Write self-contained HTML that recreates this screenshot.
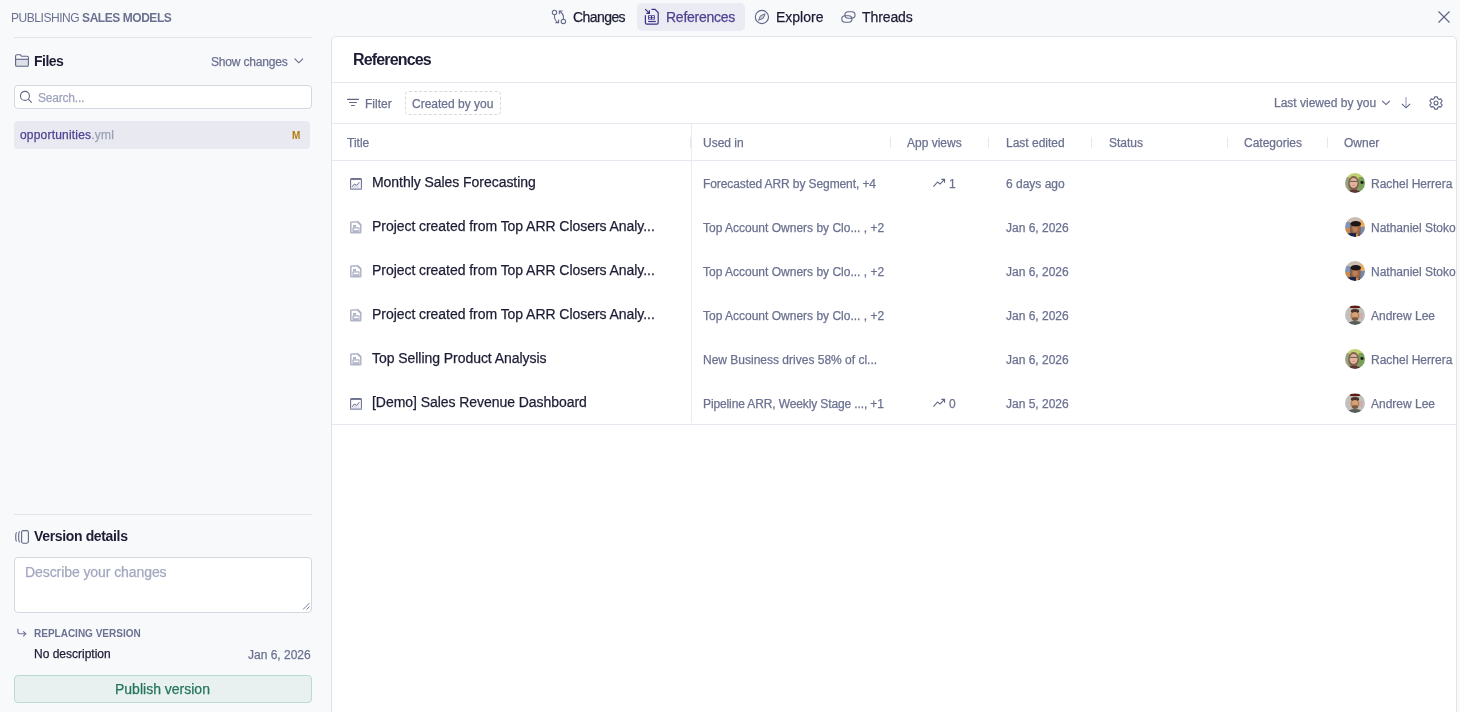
<!DOCTYPE html>
<html><head><meta charset="utf-8">
<style>
*{box-sizing:border-box;margin:0;padding:0}
html,body{width:1460px;height:712px;overflow:hidden;background:#f8f9fb;font-family:"Liberation Sans",sans-serif;}
.t{position:absolute;white-space:nowrap;line-height:1;}
.ab{position:absolute;}
.s12{font-size:12px}
.s14{font-size:14px}
.mut{color:#6b7190}
.dk{color:#1c1d35}
svg{position:absolute;overflow:visible}
.t{will-change:transform;-webkit-text-stroke:0.25px currentColor}
#clip{position:absolute;left:332px;top:0;width:1124px;height:712px;overflow:hidden}
</style></head><body>

<!-- top title -->
<div class="t s12 mut" style="left:11px;top:12px;letter-spacing:-0.45px;-webkit-text-stroke:0">PUBLISHING <b style="-webkit-text-stroke:0">SALES MODELS</b></div>

<!-- tabs -->
<div class="ab" style="left:637px;top:3px;width:108px;height:28px;background:#ebebf4;border-radius:5px;"></div>
<svg style="left:548px;top:6px" width="24" height="22" viewBox="0 0 24 22" fill="none" stroke="#636988" stroke-width="1.05">
<circle cx="6.5" cy="6.5" r="2.2"/>
<circle cx="15.4" cy="15.4" r="2.2"/>
<path d="M6.5 8.7V11.5Q6.5 14 9.6 16.3"/>
<path d="M7.4 16.6H10.6V13.4"/>
<path d="M15.4 13.2V10.5Q15.4 8 11.6 5.3"/>
<path d="M14.5 5H11.3V8.2"/>
</svg>
<div class="t s14 dk" style="left:573px;top:10px;letter-spacing:-0.57px">Changes</div>

<svg style="left:640px;top:6px" width="24" height="22" viewBox="0 0 24 22" fill="none" stroke="#3d3186" stroke-width="1.2">
<path d="M5.4 9.3V16.8A1.4 1.4 0 0 0 6.8 18.2H16.8A1.4 1.4 0 0 0 18.2 16.8V6.5L15 3.3H11.5"/>
<path d="M5.2 3.1L9.4 7.3M6.3 7.3H9.4V4.2"/>
<rect x="8.1" y="9.3" width="6.7" height="4.3" fill="#3d3186" stroke="none"/>
<rect x="9" y="10.1" width="2" height="1" fill="#ebebf4" stroke="none"/>
<rect x="12" y="10.1" width="2" height="1" fill="#ebebf4" stroke="none"/>
<rect x="9" y="11.8" width="2" height="1" fill="#ebebf4" stroke="none"/>
<rect x="12" y="11.8" width="2" height="1" fill="#ebebf4" stroke="none"/>
<path d="M8.1 15.5H15.8"/>
</svg>
<div class="t s14" style="left:666px;top:10px;color:#4f4290;letter-spacing:-0.26px">References</div>

<svg style="left:750px;top:6px" width="24" height="22" viewBox="0 0 24 22" fill="none" stroke="#5f6586" stroke-width="1.1">
<circle cx="11.9" cy="11" r="6.6"/>
<path d="M8.6 14.3L10.4 9.8L15.1 7.8L13.3 12.3Z" stroke-width="0.9" fill="#c6c9d8" stroke-linejoin="round"/>
</svg>
<div class="t s14 dk" style="left:775.5px;top:10px;">Explore</div>

<svg style="left:837px;top:6px" width="24" height="22" viewBox="0 0 24 22" fill="none" stroke="#5f6586" stroke-width="1.1">
<rect x="7.9" y="5.7" width="10.1" height="6.5" rx="3.2"/>
<rect x="4.8" y="9.8" width="10.1" height="6.5" rx="3.2"/>
</svg>
<div class="t s14 dk" style="left:862px;top:10px;letter-spacing:-0.1px">Threads</div>

<!-- close -->
<svg style="left:1438px;top:11px" width="12" height="12" viewBox="0 0 12 12"><path d="M0.5 0.5L11.5 11.5M11.5 0.5L0.5 11.5" stroke="#5f6586" stroke-width="1.2" fill="none"/></svg>

<!-- sidebar -->
<div class="ab" style="left:14px;top:37px;width:298px;height:1px;background:#e4e5ec"></div>
<svg style="left:10px;top:48px" width="24" height="24" viewBox="0 0 24 24" fill="none" stroke="#5f6586" stroke-width="1.1">
<rect x="5.6" y="11.3" width="12.8" height="7" fill="#e0e1e8" stroke="none"/>
<path d="M5.6 17A1.3 1.3 0 0 0 6.9 18.3H17.1A1.3 1.3 0 0 0 18.4 17V9.5A1.3 1.3 0 0 0 17.1 8.2H11.5L10.3 6.7H6.9A1.3 1.3 0 0 0 5.6 8Z"/>
<path d="M5.6 11.3H18.4"/>
</svg>
<div class="t s14 dk" style="left:34px;top:54.2px;font-weight:bold;letter-spacing:-0.5px;-webkit-text-stroke:0">Files</div>
<div class="t s12 mut" style="left:210.8px;top:55.8px;letter-spacing:-0.18px">Show changes</div>
<svg style="left:294px;top:58px" width="10" height="6" viewBox="0 0 10 6"><path d="M0.6 0.6L4.8 4.8L9 0.6" fill="none" stroke="#5f6586" stroke-width="1.1"/></svg>

<div class="ab" style="left:14px;top:85px;width:298px;height:24px;background:#fff;border:1px solid #d5d7e2;border-radius:4px"></div>
<svg style="left:16px;top:86px" width="24" height="22" viewBox="0 0 24 22" fill="none" stroke="#5f6586" stroke-width="1.1">
<circle cx="8.95" cy="9.9" r="4.5"/><path d="M12.2 13.2L15.8 16.7"/>
</svg>
<div class="t s12" style="left:38.4px;top:91.8px;color:#a0a5bc;letter-spacing:-0.2px">Search...</div>

<div class="ab" style="left:14px;top:121px;width:296px;height:28px;background:#e9e9f2;border-radius:4px"></div>
<div class="t s12" style="left:20.2px;top:129.3px;color:#4f4290;letter-spacing:0.2px">opportunities<span style="color:#9ca0b5">.yml</span></div>
<div class="t" style="left:292px;top:130.9px;font-size:10px;font-weight:bold;color:#b07e0c;-webkit-text-stroke:0">M</div>

<div class="ab" style="left:14px;top:514px;width:298px;height:1px;background:#e4e5ec"></div>
<svg style="left:10px;top:524px" width="24" height="24" viewBox="0 0 24 24" fill="none" stroke="#5f6586" stroke-width="1.1">
<rect x="11.6" y="6.6" width="6.8" height="12.6" rx="1.6"/>
<path d="M9.5 7.2Q8.6 8.5 8.6 12.8Q8.6 17.1 9.5 18.4"/>
<path d="M6.5 8.3Q5.7 9.5 5.7 12.9Q5.7 16.3 6.5 17.5"/>
</svg>
<div class="t s14 dk" style="left:34px;top:529.2px;font-weight:bold;letter-spacing:-0.35px;-webkit-text-stroke:0">Version details</div>
<div class="ab" style="left:14px;top:557px;width:298px;height:56px;background:#fff;border:1px solid #d5d7e2;border-radius:4px"></div>
<svg style="left:300px;top:600px" width="10" height="10" viewBox="0 0 10 10"><path d="M9.5 3L3 9.5M9.5 6.5L6.5 9.5" stroke="#6b7190" stroke-width="0.9" fill="none"/></svg>
<div class="t s14" style="left:24.5px;top:565.4px;color:#a3a8bf;letter-spacing:-0.08px">Describe your changes</div>

<svg style="left:12px;top:622px" width="20" height="20" viewBox="0 0 20 20" fill="none" stroke="#6b7190" stroke-width="1.1">
<path d="M5.9 6.7V10Q5.9 11.8 7.7 11.8H13.6"/>
<path d="M11.2 9.3L13.8 11.8L11.2 14.4"/>
</svg>
<div class="t mut" style="left:34px;top:628.5px;font-size:10px;font-weight:bold;letter-spacing:0px;-webkit-text-stroke:0">REPLACING VERSION</div>
<div class="t s12 dk" style="left:34px;top:647.7px;">No description</div>
<div class="t s12 mut" style="left:247.7px;top:648.6px;">Jan 6, 2026</div>

<div class="ab" style="left:14px;top:675px;width:298px;height:28px;background:#e8f1ef;border:1px solid #b9dcd0;border-radius:4px"></div>
<div class="t s14" style="left:115.2px;top:681.9px;color:#25745e">Publish version</div>

<!-- panel -->
<div class="ab" style="left:331px;top:36px;width:1126px;height:690px;background:#fff;border:1px solid #e2e3e8;border-radius:5px"></div>
<div class="t dk" style="left:352.6px;top:52.3px;font-size:16px;font-weight:bold;letter-spacing:-0.85px;-webkit-text-stroke:0">References</div>
<div class="ab" style="left:332px;top:82px;width:1124px;height:1px;background:#e6e7ef"></div>
<svg style="left:340px;top:92px" width="24" height="24" viewBox="0 0 24 24" fill="none" stroke="#5f6586" stroke-width="1.1">
<path d="M7.1 7.4H18.9M9.1 10.45H16.9M11.1 13.5H14.8"/>
</svg>
<div class="t s12 mut" style="left:364.5px;top:97.6px;">Filter</div>
<div class="ab" style="left:405px;top:91px;width:96px;height:24px;border:1px dashed #d5d7e2;border-radius:4px"></div>
<div class="t s12 mut" style="left:412px;top:97.6px;">Created by you</div>
<div class="t s12 mut" style="left:1274.4px;top:97px;">Last viewed by you</div>
<svg style="left:1376px;top:92px" width="72" height="22" viewBox="0 0 72 22" fill="none" stroke="#5f6586" stroke-width="1.1">
<path d="M6.2 8.9L10 12.6L13.8 8.9"/>
<path d="M30 4.9V15.6" stroke="#9a9fb8"/>
<path d="M25.9 11.8L30 15.8L34.1 11.8"/>
</svg>
<svg style="left:1429px;top:96px" width="14" height="14" viewBox="0 0 14 14" fill="none" stroke="#5f6586" stroke-width="1.1">
<path d="M5.7 0.9H8.3L8.8 2.6L10.2 3.4L11.9 2.9L13.2 5.2L11.9 6.4V7.6L13.2 8.8L11.9 11.1L10.2 10.6L8.8 11.4L8.3 13.1H5.7L5.2 11.4L3.8 10.6L2.1 11.1L0.8 8.8L2.1 7.6V6.4L0.8 5.2L2.1 2.9L3.8 3.4L5.2 2.6Z" stroke-linejoin="round"/>
<circle cx="7" cy="7" r="2"/>
</svg>
<div class="ab" style="left:332px;top:123px;width:1124px;height:1px;background:#e6e7ef"></div>

<!-- header -->
<div class="t s12 mut" style="left:347px;top:137.1px;">Title</div>
<div class="t s12 mut" style="left:703px;top:137.1px;">Used in</div>
<div class="t s12 mut" style="left:907px;top:137.1px;">App views</div>
<div class="t s12 mut" style="left:1005.5px;top:137.1px;">Last edited</div>
<div class="t s12 mut" style="left:1108.6px;top:137.1px;">Status</div>
<div class="t s12 mut" style="left:1244px;top:137.1px;">Categories</div>
<div class="t s12 mut" style="left:1344px;top:137.1px;">Owner</div>
<div class="ab" style="left:690px;top:137px;width:1px;height:11px;background:#e6e7ef"></div>
<div class="ab" style="left:890px;top:136.5px;width:1px;height:11px;background:#e6e7ef"></div>
<div class="ab" style="left:988px;top:136.5px;width:1px;height:11px;background:#e6e7ef"></div>
<div class="ab" style="left:1091px;top:136.5px;width:1px;height:11px;background:#e6e7ef"></div>
<div class="ab" style="left:1227px;top:136.5px;width:1px;height:11px;background:#e6e7ef"></div>
<div class="ab" style="left:1327px;top:136.5px;width:1px;height:11px;background:#e6e7ef"></div>
<div class="ab" style="left:332px;top:160px;width:1124px;height:1px;background:#e6e7ef"></div>
<div class="ab" style="left:691px;top:123px;width:1px;height:300px;background:#eaebf2"></div>
<div class="ab" style="left:332px;top:424px;width:1124px;height:1px;background:#e6e7ef"></div>

<div style="position:absolute;left:0;top:0;width:1456px;height:712px;overflow:hidden">
<svg style="left:350px;top:177.5px" width="12" height="12" viewBox="0 0 12 12">
<path d="M2 8.9L4.3 6L6.6 7.3L9.4 4.2V10.3H2Z" fill="#e3e5ec"/>
<path d="M1.6 11.4H10.4A1 1 0 0 0 11.4 10.4V1.6A1 1 0 0 0 10.4 0.6H1.6A1 1 0 0 0 0.6 1.6V10.4A1 1 0 0 0 1.6 11.4Z" fill="none" stroke="#6b7190" stroke-width="1.1"/>
<rect x="0.6" y="0.6" width="10.8" height="1.3" fill="#6b7190"/>
<rect x="0.3" y="10.2" width="11.4" height="1.6" rx="0.8" fill="#b3b7ca"/>
<path d="M2 8.9L4.3 6L6.6 7.3L9.4 4.2" fill="none" stroke="#6b7190" stroke-width="1"/>
</svg>
<div class="t s14 dk" style="left:371.6px;top:175.40px;letter-spacing:-0.05px">Monthly Sales Forecasting</div>
<div class="t s12 mut" style="left:703px;top:177.90px;letter-spacing:-0.1px">Forecasted ARR by Segment, +4</div>
<svg style="left:933px;top:178.7px" width="13" height="9" viewBox="0 0 13 9"><path d="M0.4 7.6L4.6 3L7.1 5.1L11.5 0.4M8.3 0.4H11.6V3.7" fill="none" stroke="#5f6586" stroke-width="1.1"/></svg>
<div class="t s12 mut" style="left:949px;top:177.90px">1</div>
<div class="t s12 mut" style="left:1006px;top:177.90px">6 days ago</div>
<svg style="left:1345px;top:173px" width="20" height="20" viewBox="0 0 20 20"><defs><clipPath id="c1345173"><circle cx="10" cy="10" r="10"/></clipPath><filter id="fc1345173" x="-10%" y="-10%" width="120%" height="120%"><feGaussianBlur stdDeviation="0.45"/></filter></defs><g clip-path="url(#c1345173)"><g filter="url(#fc1345173)"><rect width="20" height="20" fill="#8fa070"/>
<ellipse cx="10" cy="1.5" rx="9" ry="4.5" fill="#c2cf74"/>
<rect x="14" y="4" width="7" height="14" fill="#76a058"/>
<ellipse cx="17" cy="9.5" rx="1.6" ry="1.4" fill="#1a2016"/>
<rect x="0" y="6" width="3" height="9" fill="#9aa28a"/>
<ellipse cx="8.6" cy="10.5" rx="5.4" ry="7.6" fill="#80604a"/>
<ellipse cx="8.6" cy="10" rx="3.9" ry="5" fill="#e2b4a0"/>
<rect x="4.8" y="7.9" width="7.6" height="1" fill="#6a5a58"/>
<ellipse cx="8.6" cy="12.6" rx="1.3" ry="0.5" fill="#c88080"/>
<ellipse cx="9" cy="19.8" rx="7" ry="3" fill="#5a3630"/></g></g></svg>
<div class="t s12 mut" style="left:1371.3px;top:177.90px">Rachel Herrera</div>
<svg style="left:350px;top:221px" width="12" height="13" viewBox="0 0 12 13">
<path d="M1.5 0.2H7.7L11.5 4V10.9A1.5 1.5 0 0 1 10 12.4H1.5A1.5 1.5 0 0 1 0 10.9V1.7A1.5 1.5 0 0 1 1.5 0.2Z" fill="#b1b5c8"/>
<path d="M1.6 1.7H7.1L10 4.6V10.9H1.6Z" fill="#fff"/>
<rect x="3" y="4" width="3.1" height="2.4" fill="#b1b5c8"/>
<rect x="2.4" y="6.2" width="7.2" height="5" rx="1" fill="#b1b5c8"/>
<rect x="3.8" y="7.6" width="4.8" height="1.6" fill="#fff"/>
<path d="M7.6 0.2L11.5 4" stroke="#8d92ab" stroke-width="0.9"/>
</svg>
<div class="t s14 dk" style="left:371.6px;top:219.40px;letter-spacing:-0.05px">Project created from Top ARR Closers Analy...</div>
<div class="t s12 mut" style="left:703px;top:221.90px;letter-spacing:0px">Top Account Owners by Clo... , +2</div>
<div class="t s12 mut" style="left:1006px;top:221.90px">Jan 6, 2026</div>
<svg style="left:1345px;top:217px" width="20" height="20" viewBox="0 0 20 20"><defs><clipPath id="c1345217"><circle cx="10" cy="10" r="10"/></clipPath><filter id="fc1345217" x="-10%" y="-10%" width="120%" height="120%"><feGaussianBlur stdDeviation="0.45"/></filter></defs><g clip-path="url(#c1345217)"><g filter="url(#fc1345217)"><rect width="20" height="20" fill="#6c6058"/>
<rect x="0" y="0" width="20" height="6" fill="#c9bcb0"/>
<rect x="0" y="5" width="5" height="6" fill="#8494b4"/>
<rect x="0" y="11" width="5" height="5" fill="#c88850"/>
<rect x="15.5" y="3" width="5" height="7" fill="#e8a860"/>
<rect x="15.5" y="10" width="5" height="8" fill="#7a88a8"/>
<ellipse cx="10.8" cy="11.8" rx="4.6" ry="5.6" fill="#9c6444"/>
<ellipse cx="10.2" cy="11.5" rx="2.6" ry="3.6" fill="#bf8058"/>
<ellipse cx="10.8" cy="6.8" rx="5.2" ry="2.8" fill="#1c1616"/>
<ellipse cx="8" cy="20.5" rx="8" ry="4.5" fill="#1c2444"/>
<rect x="11" y="16.5" width="2.5" height="4" fill="#d88848"/></g></g></svg>
<div class="t s12 mut" style="left:1371.3px;top:221.90px">Nathaniel Stokoe</div>
<svg style="left:350px;top:265px" width="12" height="13" viewBox="0 0 12 13">
<path d="M1.5 0.2H7.7L11.5 4V10.9A1.5 1.5 0 0 1 10 12.4H1.5A1.5 1.5 0 0 1 0 10.9V1.7A1.5 1.5 0 0 1 1.5 0.2Z" fill="#b1b5c8"/>
<path d="M1.6 1.7H7.1L10 4.6V10.9H1.6Z" fill="#fff"/>
<rect x="3" y="4" width="3.1" height="2.4" fill="#b1b5c8"/>
<rect x="2.4" y="6.2" width="7.2" height="5" rx="1" fill="#b1b5c8"/>
<rect x="3.8" y="7.6" width="4.8" height="1.6" fill="#fff"/>
<path d="M7.6 0.2L11.5 4" stroke="#8d92ab" stroke-width="0.9"/>
</svg>
<div class="t s14 dk" style="left:371.6px;top:263.40px;letter-spacing:-0.05px">Project created from Top ARR Closers Analy...</div>
<div class="t s12 mut" style="left:703px;top:265.90px;letter-spacing:0px">Top Account Owners by Clo... , +2</div>
<div class="t s12 mut" style="left:1006px;top:265.90px">Jan 6, 2026</div>
<svg style="left:1345px;top:261px" width="20" height="20" viewBox="0 0 20 20"><defs><clipPath id="c1345261"><circle cx="10" cy="10" r="10"/></clipPath><filter id="fc1345261" x="-10%" y="-10%" width="120%" height="120%"><feGaussianBlur stdDeviation="0.45"/></filter></defs><g clip-path="url(#c1345261)"><g filter="url(#fc1345261)"><rect width="20" height="20" fill="#6c6058"/>
<rect x="0" y="0" width="20" height="6" fill="#c9bcb0"/>
<rect x="0" y="5" width="5" height="6" fill="#8494b4"/>
<rect x="0" y="11" width="5" height="5" fill="#c88850"/>
<rect x="15.5" y="3" width="5" height="7" fill="#e8a860"/>
<rect x="15.5" y="10" width="5" height="8" fill="#7a88a8"/>
<ellipse cx="10.8" cy="11.8" rx="4.6" ry="5.6" fill="#9c6444"/>
<ellipse cx="10.2" cy="11.5" rx="2.6" ry="3.6" fill="#bf8058"/>
<ellipse cx="10.8" cy="6.8" rx="5.2" ry="2.8" fill="#1c1616"/>
<ellipse cx="8" cy="20.5" rx="8" ry="4.5" fill="#1c2444"/>
<rect x="11" y="16.5" width="2.5" height="4" fill="#d88848"/></g></g></svg>
<div class="t s12 mut" style="left:1371.3px;top:265.90px">Nathaniel Stokoe</div>
<svg style="left:350px;top:309px" width="12" height="13" viewBox="0 0 12 13">
<path d="M1.5 0.2H7.7L11.5 4V10.9A1.5 1.5 0 0 1 10 12.4H1.5A1.5 1.5 0 0 1 0 10.9V1.7A1.5 1.5 0 0 1 1.5 0.2Z" fill="#b1b5c8"/>
<path d="M1.6 1.7H7.1L10 4.6V10.9H1.6Z" fill="#fff"/>
<rect x="3" y="4" width="3.1" height="2.4" fill="#b1b5c8"/>
<rect x="2.4" y="6.2" width="7.2" height="5" rx="1" fill="#b1b5c8"/>
<rect x="3.8" y="7.6" width="4.8" height="1.6" fill="#fff"/>
<path d="M7.6 0.2L11.5 4" stroke="#8d92ab" stroke-width="0.9"/>
</svg>
<div class="t s14 dk" style="left:371.6px;top:307.40px;letter-spacing:-0.05px">Project created from Top ARR Closers Analy...</div>
<div class="t s12 mut" style="left:703px;top:309.90px;letter-spacing:0px">Top Account Owners by Clo... , +2</div>
<div class="t s12 mut" style="left:1006px;top:309.90px">Jan 6, 2026</div>
<svg style="left:1345px;top:305px" width="20" height="20" viewBox="0 0 20 20"><defs><clipPath id="c1345305"><circle cx="10" cy="10" r="10"/></clipPath><filter id="fc1345305" x="-10%" y="-10%" width="120%" height="120%"><feGaussianBlur stdDeviation="0.45"/></filter></defs><g clip-path="url(#c1345305)"><g filter="url(#fc1345305)"><rect width="20" height="20" fill="#c2c0bc"/>
<ellipse cx="10" cy="2" rx="5.5" ry="1.2" fill="#5e1c16"/>
<ellipse cx="10" cy="10.4" rx="4.5" ry="5.6" fill="#b88660"/>
<ellipse cx="10" cy="6" rx="4.2" ry="2" fill="#4a3428"/>
<ellipse cx="10" cy="9.5" rx="3" ry="2.6" fill="#d8a274"/>
<ellipse cx="10" cy="14" rx="3" ry="1.8" fill="#7a5a44"/>
<ellipse cx="10" cy="20.5" rx="8" ry="4.5" fill="#585c58"/>
<rect x="15" y="8" width="3" height="6" fill="#ccaeae"/></g></g></svg>
<div class="t s12 mut" style="left:1371.3px;top:309.90px">Andrew Lee</div>
<svg style="left:350px;top:353px" width="12" height="13" viewBox="0 0 12 13">
<path d="M1.5 0.2H7.7L11.5 4V10.9A1.5 1.5 0 0 1 10 12.4H1.5A1.5 1.5 0 0 1 0 10.9V1.7A1.5 1.5 0 0 1 1.5 0.2Z" fill="#b1b5c8"/>
<path d="M1.6 1.7H7.1L10 4.6V10.9H1.6Z" fill="#fff"/>
<rect x="3" y="4" width="3.1" height="2.4" fill="#b1b5c8"/>
<rect x="2.4" y="6.2" width="7.2" height="5" rx="1" fill="#b1b5c8"/>
<rect x="3.8" y="7.6" width="4.8" height="1.6" fill="#fff"/>
<path d="M7.6 0.2L11.5 4" stroke="#8d92ab" stroke-width="0.9"/>
</svg>
<div class="t s14 dk" style="left:371.6px;top:351.40px;letter-spacing:-0.05px">Top Selling Product Analysis</div>
<div class="t s12 mut" style="left:703px;top:353.90px;letter-spacing:0px">New Business drives 58% of cl...</div>
<div class="t s12 mut" style="left:1006px;top:353.90px">Jan 6, 2026</div>
<svg style="left:1345px;top:349px" width="20" height="20" viewBox="0 0 20 20"><defs><clipPath id="c1345349"><circle cx="10" cy="10" r="10"/></clipPath><filter id="fc1345349" x="-10%" y="-10%" width="120%" height="120%"><feGaussianBlur stdDeviation="0.45"/></filter></defs><g clip-path="url(#c1345349)"><g filter="url(#fc1345349)"><rect width="20" height="20" fill="#8fa070"/>
<ellipse cx="10" cy="1.5" rx="9" ry="4.5" fill="#c2cf74"/>
<rect x="14" y="4" width="7" height="14" fill="#76a058"/>
<ellipse cx="17" cy="9.5" rx="1.6" ry="1.4" fill="#1a2016"/>
<rect x="0" y="6" width="3" height="9" fill="#9aa28a"/>
<ellipse cx="8.6" cy="10.5" rx="5.4" ry="7.6" fill="#80604a"/>
<ellipse cx="8.6" cy="10" rx="3.9" ry="5" fill="#e2b4a0"/>
<rect x="4.8" y="7.9" width="7.6" height="1" fill="#6a5a58"/>
<ellipse cx="8.6" cy="12.6" rx="1.3" ry="0.5" fill="#c88080"/>
<ellipse cx="9" cy="19.8" rx="7" ry="3" fill="#5a3630"/></g></g></svg>
<div class="t s12 mut" style="left:1371.3px;top:353.90px">Rachel Herrera</div>
<svg style="left:350px;top:397.5px" width="12" height="12" viewBox="0 0 12 12">
<path d="M2 8.9L4.3 6L6.6 7.3L9.4 4.2V10.3H2Z" fill="#e3e5ec"/>
<path d="M1.6 11.4H10.4A1 1 0 0 0 11.4 10.4V1.6A1 1 0 0 0 10.4 0.6H1.6A1 1 0 0 0 0.6 1.6V10.4A1 1 0 0 0 1.6 11.4Z" fill="none" stroke="#6b7190" stroke-width="1.1"/>
<rect x="0.6" y="0.6" width="10.8" height="1.3" fill="#6b7190"/>
<rect x="0.3" y="10.2" width="11.4" height="1.6" rx="0.8" fill="#b3b7ca"/>
<path d="M2 8.9L4.3 6L6.6 7.3L9.4 4.2" fill="none" stroke="#6b7190" stroke-width="1"/>
</svg>
<div class="t s14 dk" style="left:371.6px;top:395.40px;letter-spacing:-0.05px">[Demo] Sales Revenue Dashboard</div>
<div class="t s12 mut" style="left:703px;top:397.90px;letter-spacing:-0.12px">Pipeline ARR, Weekly Stage ..., +1</div>
<svg style="left:933px;top:398.7px" width="13" height="9" viewBox="0 0 13 9"><path d="M0.4 7.6L4.6 3L7.1 5.1L11.5 0.4M8.3 0.4H11.6V3.7" fill="none" stroke="#5f6586" stroke-width="1.1"/></svg>
<div class="t s12 mut" style="left:949px;top:397.90px">0</div>
<div class="t s12 mut" style="left:1006px;top:397.90px">Jan 5, 2026</div>
<svg style="left:1345px;top:393px" width="20" height="20" viewBox="0 0 20 20"><defs><clipPath id="c1345393"><circle cx="10" cy="10" r="10"/></clipPath><filter id="fc1345393" x="-10%" y="-10%" width="120%" height="120%"><feGaussianBlur stdDeviation="0.45"/></filter></defs><g clip-path="url(#c1345393)"><g filter="url(#fc1345393)"><rect width="20" height="20" fill="#c2c0bc"/>
<ellipse cx="10" cy="2" rx="5.5" ry="1.2" fill="#5e1c16"/>
<ellipse cx="10" cy="10.4" rx="4.5" ry="5.6" fill="#b88660"/>
<ellipse cx="10" cy="6" rx="4.2" ry="2" fill="#4a3428"/>
<ellipse cx="10" cy="9.5" rx="3" ry="2.6" fill="#d8a274"/>
<ellipse cx="10" cy="14" rx="3" ry="1.8" fill="#7a5a44"/>
<ellipse cx="10" cy="20.5" rx="8" ry="4.5" fill="#585c58"/>
<rect x="15" y="8" width="3" height="6" fill="#ccaeae"/></g></g></svg>
<div class="t s12 mut" style="left:1371.3px;top:397.90px">Andrew Lee</div>
</div>

</body></html>
